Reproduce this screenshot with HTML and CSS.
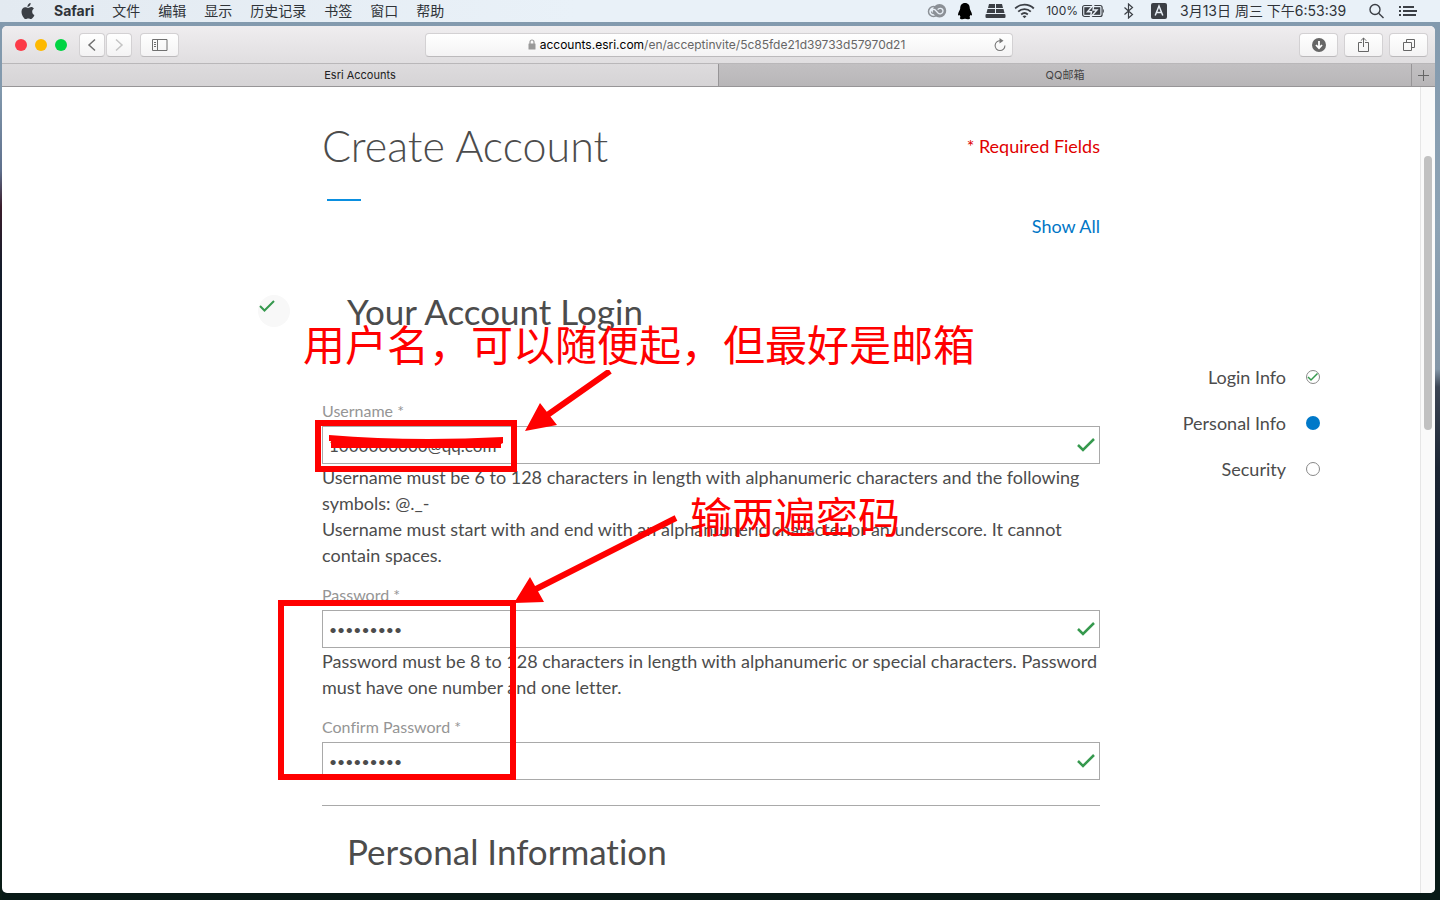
FILE: index.html
```html
<!DOCTYPE html>
<html lang="en">
<head>
<meta charset="utf-8">
<title>Esri Accounts</title>
<link rel="stylesheet" href="styles.css">
</head>
<body>
<header class="menubar">
  <nav class="menus" lang="zh-CN">
    <button class="menu apple" aria-label="Apple">
      <svg width="14" height="17" viewBox="0 0 14 17"><path fill="#3b3f45" d="M9.600 0c.2 1.100-.3 2.100-.9 2.800C8.100 3.500 7.300 4 6.500 3.900c-.1-1 .3-2 .9-2.700C8 .5 8.900.1 9.600 0zM12.900 5.800c-1.200.8-1.700 1.700-1.700 2.900 0 1.500.8 2.600 2.200 3.200-.3 1-.8 1.900-1.400 2.700-.6.9-1.300 1.500-2.200 1.500s-1.300-.5-2.500-.5-1.600.5-2.500.5-1.600-.7-2.200-1.600C1.300 12.900.5 10.700.5 8.700c0-2.900 1.800-4.500 3.700-4.500 1.200 0 2.100.7 2.900.7.800 0 1.800-.8 3.200-.8 1 0 2 .600 2.600 1.700z"/></svg>
    </button>
    <button class="menu app">Safari</button>
    <button class="menu">文件</button>
    <button class="menu">编辑</button>
    <button class="menu">显示</button>
    <button class="menu">历史记录</button>
    <button class="menu">书签</button>
    <button class="menu">窗口</button>
    <button class="menu">帮助</button>
  </nav>
  <div class="status">
    <svg width="22" height="16" viewBox="0 0 22 16" fill="none" stroke="#8b9096" stroke-width="1.500"><circle cx="6.500" cy="8.500" r="5"/><circle cx="12.500" cy="7.700" r="6" fill="#8b9096"/><path d="M4.500 8.500c0-2.500 3-2.500 4.200-1l2.300 2.500c1.500 1.500 5 1 5-2s-4-3.500-5.300-1.300" stroke="#e8eff6" stroke-width="1.300"/><path d="M4.500 8.500c0 2.300 2.500 2.500 4 1.500" stroke-width="1.300"/></svg>
    <svg width="20" height="18" viewBox="0 0 20 18"><path fill="#000" d="M8 1c3.300 0 4.800 2.300 4.800 5.500 0 1.300 2.200 3.800 2.200 6.300 0 1.200-.8.700-1.500-.1-.2 1-.6 1.800-1.200 2.400.8.400 1 .8.700 1.400-.4 1-3.400.8-5 .3-1.600.5-4.600.7-5-.3-.3-.6-.1-1 .7-1.400-.6-.6-1-1.400-1.200-2.400C1.800 13.500 1 14 1 12.800c0-2.500 2.200-5 2.200-6.300C3.200 3.300 4.700 1 8 1z"/></svg>
    <svg width="21" height="16" viewBox="0 0 21 16" fill="#3b3f45"><path d="M4 1h6v4H3zM11 1h6l1 4h-7zM2.500 6H10v4H1.500zM11 6h7.500l1 4H11z"/><rect x=".5" y="11" width="20" height="4" rx="1"/></svg>
    <svg width="24" height="16" viewBox="0 0 24 16" fill="none" stroke="#3b3f45" stroke-width="1.800"><path d="M1.200 5.500a13 13 0 0 1 18.600 0M4.200 8.600a9 9 0 0 1 12.600 0M7.200 11.500a5 5 0 0 1 6.600 0"/><path d="M8.500 13.300a3 3 0 0 1 4 0l-2 2z" fill="#3b3f45" stroke="none"/></svg>
    <span class="battery">100%
      <svg width="27" height="14" viewBox="0 0 27 14"><rect x=".6" y="1.500" width="19.500" height="11" rx="2" fill="none" stroke="#3b3f45" stroke-width="1.200"/><rect x="2.300" y="3.200" width="16" height="7.600" fill="#3b3f45"/><path d="M21 5c1.200.4 1.200 3.600 0 4z" fill="#3b3f45"/><path d="M11.800.5 5.500 7.800h4L8.300 13.500 15 6h-4z" fill="#3b3f45" stroke="#e8eff6" stroke-width="1.400"/></svg>
    </span>
    <svg width="26" height="16" viewBox="0 0 26 16" fill="none" stroke="#3b3f45" stroke-width="1.200"><path d="m7.500 4.500 8 7-4 3.500V1l4 3.500-8 7"/></svg>
    <svg width="21" height="16" viewBox="0 0 21 16"><rect width="16" height="16" rx="2" fill="#3b3f45"/><path d="m4.200 12.500 3.800-9.500 3.800 9.500M5.600 9.500h4.800" fill="none" stroke="#e8eff6" stroke-width="1.500"/></svg>
    <time class="clock" lang="zh-CN">3月13日 周三 下午6:53:39</time>
    <svg width="32" height="16" viewBox="0 0 32 16" fill="none" stroke="#3b3f45" stroke-width="1.400"><circle cx="16" cy="6.500" r="5"/><path d="m19.700 10.200 4.800 4.800"/></svg>
    <svg width="18" height="16" viewBox="0 0 18 16" fill="#3b3f45"><path d="M0 3h2v2H0zM4 3h11v2H4zM0 7h2v2H0zM4 7h14v2H4zM0 11h2v2H0zM4 11h13v2H4z"/></svg>
  </div>
</header>

<div class="window">
  <div class="toolbar">
    <div class="tool-group">
      <div class="lights">
        <button class="light close" aria-label="Close"></button>
        <button class="light minimize" aria-label="Minimize"></button>
        <button class="light expand" aria-label="Full screen"></button>
      </div>
      <div class="history">
        <button class="tool" aria-label="Back"><svg width="10" height="14" viewBox="0 0 10 14" fill="none" stroke="#707070" stroke-width="1.500"><path d="M8 1.500 2 7l6 5.500"/></svg></button>
        <button class="tool" aria-label="Forward"><svg width="10" height="14" viewBox="0 0 10 14" fill="none" stroke="#c4c4c4" stroke-width="1.500"><path d="m2 1.500 6 5.500-6 5.500"/></svg></button>
      </div>
      <button class="tool wide" aria-label="Sidebar"><svg width="16" height="12" viewBox="0 0 16 12" fill="none" stroke="#707070"><path d="M.5.500h14.500v11H.5zM5.500.500v11M2 3.500h2M2 5.500h2M2 7.500h2"/></svg></button>
    </div>
    <div class="address">
      <span class="url"><svg width="8" height="11" viewBox="0 0 8 11"><path d="M2 5V3a2 2 0 0 1 4 0v2" fill="none" stroke="#999" stroke-width="1.200"/><rect y="4.500" x=".5" width="7" height="6" rx=".5" fill="#999"/></svg><span><b>accounts.esri.com</b>/en/acceptinvite/5c85fde21d39733d57970d21</span></span>
      <button class="reload" aria-label="Reload"><svg width="12" height="14" viewBox="0 0 12 14" fill="none" stroke="#777" stroke-width="1.100"><path d="M6.500 2.800A4.900 4.900 0 1 0 10.900 7.500"/><path d="m5.500 0 4 2.800-4 2.800z" fill="#777" stroke="none"/></svg></button>
    </div>
    <div class="tool-group end">
      <button class="tool wide" aria-label="Downloads"><svg width="14" height="14" viewBox="0 0 14 14"><circle cx="7" cy="7" r="7" fill="#666"/><path d="M7 3v6M4 7l3 3.200L10 7" fill="none" stroke="#fff" stroke-width="1.800"/></svg></button>
      <button class="tool wide" aria-label="Share"><svg width="12" height="16" viewBox="0 0 12 16" fill="none" stroke="#666"><path d="M4 5.500H.5v9h10v-9H7M5.500 10V1M2.800 3.700 5.500 1l2.700 2.700"/></svg></button>
      <button class="tool wide" aria-label="Tabs"><svg width="12" height="12" viewBox="0 0 12 12" fill="none" stroke="#666"><path d="M.5 3.500h8v8h-8zM3.500 3.500v-3h8v8h-3"/></svg></button>
    </div>
  </div>
  <div class="tabs">
    <button class="tab active">Esri Accounts</button>
    <button class="tab">QQ邮箱</button>
    <button class="new-tab" aria-label="New tab"><svg width="11" height="11" viewBox="0 0 11 11" stroke="#666"><path d="M5.500 0v11M0 5.500h11"/></svg></button>
  </div>

  <div class="viewport">
    <div class="page">
      <div class="gutter"><span class="done"><svg width="16" height="12" viewBox="0 0 16 12" fill="none" stroke="#36994e" stroke-width="2"><path d="m1 6 4.500 4.500L15 1"/></svg></span></div>
      <main class="column">
        <div class="title-row">
          <h1>Create Account</h1>
          <span class="required">* Required Fields</span>
        </div>
        <div class="accent"></div>
        <a class="show-all" href="#all">Show All</a>

        <form class="form">
          <h2>Your Account Login</h2>
          <div class="fields">
            <div class="field">
              <label for="username">Username *</label>
              <div class="control">
                <input id="username" type="text" value="1000000000@qq.com">
                <svg class="valid" width="18" height="14" viewBox="0 0 18 14"><path d="m1 7 5 5L17 1"/></svg>
              </div>
              <p>Username must be 6 to 128 characters in length with alphanumeric characters and the following symbols: @._-</p>
              <p>Username must start with and end with an alphanumeric character or an underscore. It cannot contain spaces.</p>
            </div>
            <div class="field">
              <label for="password">Password *</label>
              <div class="control">
                <input id="password" type="password" value="abcdefgh1">
                <svg class="valid" width="18" height="14" viewBox="0 0 18 14"><path d="m1 7 5 5L17 1"/></svg>
              </div>
              <p>Password must be 8 to 128 characters in length with alphanumeric or special characters. Password must have one number and one letter.</p>
            </div>
            <div class="field">
              <label for="confirm">Confirm Password *</label>
              <div class="control">
                <input id="confirm" type="password" value="abcdefgh1">
                <svg class="valid" width="18" height="14" viewBox="0 0 18 14"><path d="m1 7 5 5L17 1"/></svg>
              </div>
            </div>
          </div>
          <hr>
          <h2>Personal Information</h2>
        </form>

        <svg class="marks" width="400" height="411" viewBox="278 370 400 411">
          <g fill="none" stroke="#f00" stroke-width="6">
            <rect x="318" y="423" width="196" height="46"/>
            <rect x="281" y="603" width="232" height="174"/>
            <path d="M610 371 546 416M676 518 534 590"/>
          </g>
          <g fill="#f00">
            <path d="m525 431 15-28 17 22zM514 603l16-26 14 25z"/>
            <path d="M329 435q82 7 174 2v6l-2 1v4H331v-7h-2z"/>
          </g>
        </svg>
        <span class="note note-user" lang="zh-CN">用户名，可以随便起，但最好是邮箱</span>
        <span class="note note-pass" lang="zh-CN">输两遍密码</span>
      </main>
      <nav class="gutter steps">
        <a href="#login">Login Info <svg width="14" height="14" viewBox="0 0 14 14" fill="none"><circle cx="7" cy="7" r="6.500" stroke="#888"/><path d="m2 7 3 3 6.500-6.500" stroke="#36994e" stroke-width="1.500"/></svg></a>
        <a href="#personal">Personal Info <svg width="14" height="14" viewBox="0 0 14 14"><circle cx="7" cy="7" r="7" fill="#0079c9"/></svg></a>
        <a href="#security">Security <svg width="14" height="14" viewBox="0 0 14 14" fill="none"><circle cx="7" cy="7" r="6.500" stroke="#888"/></svg></a>
      </nav>
    </div>
    <div class="scrollbar"><div class="thumb"></div></div>
  </div>
</div>
</body>
</html>
```
FILE: styles.css
```css
* { box-sizing: border-box; }

body {
  margin: 0;
  height: 100vh;
  display: flex;
  flex-direction: column;
  gap: 4px;
  overflow: hidden;
  font-family: Lato, "Noto Sans CJK SC", sans-serif;
  font-variant-ligatures: none;
  color: #4c4c4c;
  background:
    linear-gradient(#8299ad 0, #8299ad 10%, #5e6f8c 19%, #3a1c2a 23%, #131c2b 30%, #08121c 60%, #0a1d16 100%) left / 2px 100% no-repeat,
    linear-gradient(#8299ad 0, #8da3b5 25%, #8497a8 41%, #3b4453 43%, #1c2634 52%, #0b1522 70%, #081a17 97%, #081a17 100%);
}

button {
  margin: 0;
  padding: 0;
  border: 0;
  background: none;
  font: inherit;
  color: inherit;
}

svg { display: block; flex: none; }

.menubar {
  flex: none;
  height: 22px;
  display: flex;
  align-items: center;
  justify-content: space-between;
  padding: 0 23px 0 21px;
  background: linear-gradient(90deg, #e3eaf1, #e9f1f8 40%, #e9f1f8);
  color: #2f3338;
  font: 14px/20px Inter, "Noto Sans CJK SC", sans-serif;
}

.menus { display: flex; align-items: center; gap: 18px; }
.app { font-weight: 700; }
.apple { margin-right: 1px; }

.status { display: flex; align-items: center; gap: 8px; }
.battery { display: flex; align-items: center; gap: 4px; font-size: 12px; }
.clock { min-width: 171px; }

.window {
  flex: 1;
  min-height: 0;
  margin: 0 5px 7px 2px;
  display: flex;
  flex-direction: column;
  overflow: hidden;
  border-radius: 5px;
  background: #fff;
}

.toolbar {
  flex: none;
  height: 38px;
  display: grid;
  grid-template-columns: minmax(0, 1fr) minmax(0, 588px) minmax(0, 1fr);
  align-items: center;
  padding: 0 7px;
  background: linear-gradient(#efedef, #e0dee0);
  border-bottom: 1px solid #b9b7b9;
}

.tool-group { display: flex; align-items: center; gap: 8px; }
.end { justify-content: flex-end; gap: 6px; }
.lights { display: flex; gap: 8px; padding: 0 4px 0 6px; }
.light { width: 12px; height: 12px; border-radius: 50%; }
.close { background: #fc3b48; }
.minimize { background: #fdb900; }
.expand { background: #00d443; }
.history { display: flex; gap: 1px; }

.tool {
  width: 26px;
  height: 24px;
  display: flex;
  align-items: center;
  justify-content: center;
  border: 1px solid #d3d1d3;
  border-bottom-color: #bcbabc;
  border-radius: 4px;
  background: linear-gradient(#fff, #f4f3f4);
}
.wide { width: 39px; }

.address {
  height: 24px;
  display: flex;
  align-items: center;
  padding: 0 6px 0 14px;
  border: 1px solid #d3d1d3;
  border-bottom-color: #bcbabc;
  border-radius: 4px;
  background: linear-gradient(#fff, #f4f3f4);
  font: 12px/20px Inter, sans-serif;
  color: #666;
}
.url { flex: 1; display: flex; align-items: center; justify-content: center; gap: 4px; }
.url b { font-weight: 400; color: #000; }

.tabs {
  flex: none;
  height: 23px;
  display: flex;
  border-bottom: 1px solid #979597;
  background: linear-gradient(#c2c0c2, #b8b6b8);
  font: 11px/20px Inter, "Noto Sans CJK SC", sans-serif;
  color: #444;
}
.tab { flex: 693 1 0; border-right: 1px solid #979597; }
.active { flex-grow: 717; background: linear-gradient(#dddbdd, #d6d4d6); color: #222; }
.new-tab { width: 23px; display: flex; align-items: center; justify-content: center; }

.viewport { flex: 1; min-height: 0; display: flex; }

.page {
  flex: 1;
  display: grid;
  grid-template-columns: minmax(0, 1fr) minmax(0, 778px) minmax(0, 1fr);
  font-size: 18px;
  line-height: 26px;
}

.gutter { display: flex; justify-content: flex-end; padding: 208px 32px 0 0; }
.done { width: 32px; height: 32px; padding: 5px 0 0 1px; border-radius: 50%; background: #f8f8f8; }

.column { position: relative; padding-top: 35px; }
.title-row { display: flex; align-items: center; justify-content: space-between; }
h1, h2, p { margin: 0; }
h1 { font-size: 43px; line-height: 48px; font-weight: 300; }
h2 { padding-left: 25px; font-size: 35px; line-height: 40px; font-weight: 400; }
.required { color: #e00000; }
.accent { width: 34px; height: 2px; margin: 29px 0 12px 5px; background: #0a8fe0; }
.show-all { display: block; text-align: right; color: #0076c6; text-decoration: none; }
.form { margin-top: 52px; }
.fields { display: flex; flex-direction: column; gap: 14px; margin-top: 67px; }
.field { display: flex; flex-direction: column; }
label { margin-bottom: 2px; font-size: 16px; color: #959595; }

.control { position: relative; }
input {
  display: block;
  width: 100%;
  height: 38px;
  padding: 0 36px 0 6px;
  border: 1px solid #a9a9a9;
  font: 17px/26px Lato, sans-serif;
  color: #4c4c4c;
  background: #fff;
}
input[type="password"] { font-size: 14px; }
.valid { position: absolute; right: 5px; top: 12px; fill: none; stroke: #36994e; stroke-width: 2.5; }

hr { height: 1px; margin: 25px 0; border: 0; background: #a9a9a9; }

.marks { position: absolute; left: -44px; top: 283px; pointer-events: none; }
.note {
  position: absolute;
  font: 42px/60px "Noto Sans CJK SC", sans-serif;
  color: #f00;
  white-space: nowrap;
}
.note-user { left: -19px; top: 226px; }
.note-pass { left: 368px; top: 398px; }

.steps { flex-direction: column; justify-content: flex-start; gap: 20px; padding: 277px 100px 0 0; }
.steps a {
  display: flex;
  align-items: center;
  justify-content: flex-end;
  gap: 20px;
  color: #4c4c4c;
  text-decoration: none;
}

.scrollbar { flex: none; width: 15px; padding: 69px 3px 0; border-left: 1px solid #e6e6e6; background: #fafafa; }
.thumb { width: 8px; height: 274px; border-radius: 4px; background: #c1c1c1; }
```
